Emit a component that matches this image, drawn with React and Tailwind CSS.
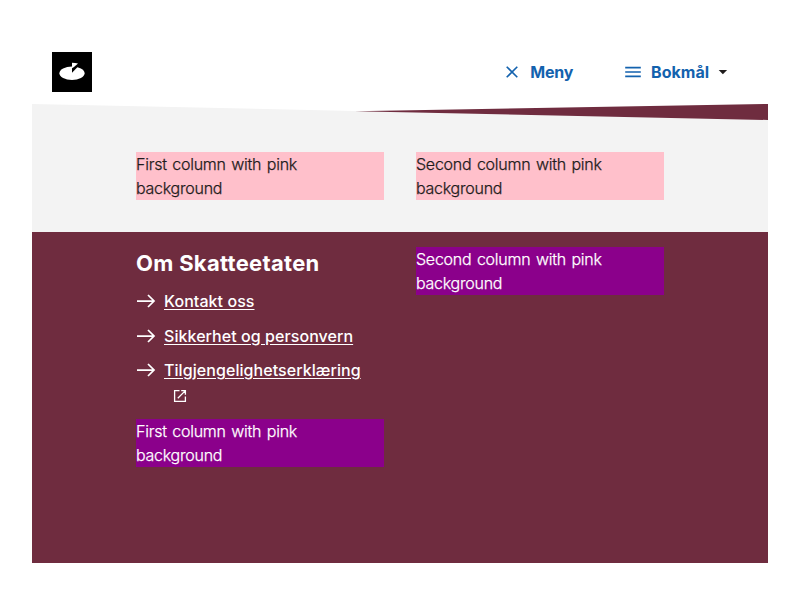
const ArrowIcon = () => (
  <svg className="block h-[14px] w-[20px] shrink-0" viewBox="0 0 20 14" fill="none" stroke="currentColor" strokeWidth="1.75">
    <path d="M1 7H18M12 1L18 7L12 13" />
  </svg>
);

const ExternalIcon = () => (
  <svg className="block h-[14px] w-[14px]" viewBox="0 0 14 14" fill="none" stroke="currentColor" strokeWidth="1.3">
    <path d="M6.5 1.6H1.6V12.4H12.4V7.5M8.2 1.6H12.4V5.8M12.4 1.6L4.8 9.2" />
  </svg>
);

const Box = ({ children, className }) => (
  <div className={`w-[248px] leading-6 font-light tracking-[-0.25px] [word-spacing:1.3px] [-webkit-text-stroke:0.25px_currentColor] ${className}`}>{children}</div>
);

const FooterLink = ({ children }) => (
  <a className="flex h-6 items-center font-medium" href="#">
    <ArrowIcon />
    <span className="ml-2 tracking-[0.06px] underline underline-offset-2">{children}</span>
  </a>
);

export default function App() {
  return (
    <div className="h-[600px] w-[800px] bg-white px-8 pt-8 font-['Inter',sans-serif] text-base text-[#1f1c1c]">
      <header className="flex h-[72px] items-center pt-2 pr-10 pl-5">
        <svg className="block h-10 w-10" viewBox="0 0 40 40">
          <rect width="40" height="40" fill="#000" />
          <ellipse cx="20" cy="21.2" rx="12.6" ry="6.8" fill="#fff" />
          <path d="M20 20.8V13H27.5Z" fill="#000" />
          <path d="M20 16.2V10.8Q23.2 10.8 26 11.4L22 15Z" fill="#fff" />
        </svg>
        <div className="ml-auto flex items-center font-bold text-[#1362ae]">
          <svg className="block h-5 w-5" viewBox="0 0 20 20" fill="none" stroke="currentColor" strokeWidth="1.6">
            <path d="M4.7 4.7L15.3 15.3M15.3 4.7L4.7 15.3" />
          </svg>
          <span className="mr-px ml-2 tracking-[-0.25px]">Meny</span>
        </div>
        <div className="ml-[49px] flex items-center font-bold text-[#1362ae]">
          <svg className="block h-5 w-5" viewBox="0 0 20 20" fill="none" stroke="currentColor" strokeWidth="1.7">
            <path d="M2.2 5.6H17.8M2.2 10H17.8M2.2 14.4H17.8" />
          </svg>
          <span className="ml-2">Bokmål</span>
          <svg className="ml-[9px] block h-[6px] w-[10px]" viewBox="0 0 10 6">
            <path d="M.7 1H9.1L4.9 5.2Z" fill="#1f1c1c" />
          </svg>
        </div>
      </header>
      <svg className="block h-4 w-[736px]" viewBox="0 0 736 16">
        <path d="M0 0L736 16H0Z" fill="#f3f3f3" />
        <path d="M323 7.3L736 0V16Z" fill="#6f2c3f" />
      </svg>
      <main className="flex h-[112px] gap-8 bg-[#f3f3f3] pt-8 pl-[104px]">
        <Box className="h-12 bg-[#ffc0cb]">First column with pink background</Box>
        <Box className="h-12 bg-[#ffc0cb]">Second column with pink background</Box>
      </main>
      <footer className="flex h-[331px] gap-8 bg-[#6f2c3f] pt-[15px] pl-[104px] text-white">
        <div className="w-[248px]">
          <h2 className="h-8 text-[22px] leading-8 font-bold tracking-[0.3px]">Om Skatteetaten</h2>
          <div className="mt-[10px] flex flex-col gap-[10.5px]">
            <FooterLink>Kontakt oss</FooterLink>
            <FooterLink>Sikkerhet og personvern</FooterLink>
            <div>
              <FooterLink>Tilgjengelighetserklæring</FooterLink>
              <div className="mt-[7px] pl-[37px]">
                <ExternalIcon />
              </div>
            </div>
          </div>
          <Box className="mt-4 h-12 bg-[#8b008b]">First column with pink background</Box>
        </div>
        <Box className="h-12 bg-[#8b008b]">Second column with pink background</Box>
      </footer>
    </div>
  );
}
